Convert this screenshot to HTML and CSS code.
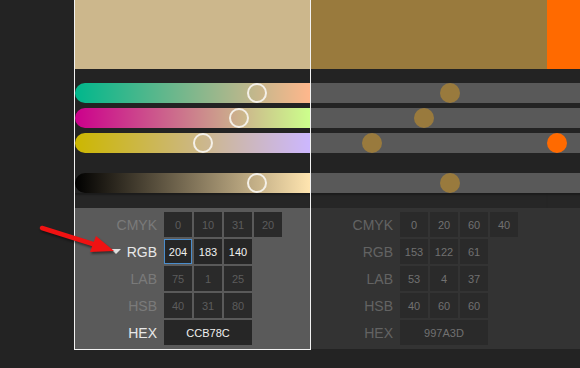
FILE: index.html
```html
<!DOCTYPE html>
<html lang="en">
<head>
    <meta charset="UTF-8">
    <title>Color compare</title>
    <link rel="stylesheet" href="styles.css">
</head>
<body>
    <div class="picker">
        <!-- current color -->
        <div class="panel current">
            <div class="swatch" style="background:#CCB78C"></div>
            <div class="sliders">
                <div class="track" style="background:linear-gradient(to right, rgb(0,183,140), rgb(255,183,140))"><span class="knob" style="left:172px"></span></div>
                <div class="track" style="background:linear-gradient(to right, rgb(204,0,140), rgb(204,255,140))"><span class="knob" style="left:154px"></span></div>
                <div class="track gap" style="background:linear-gradient(to right, rgb(204,183,0), rgb(204,183,255))"><span class="knob" style="left:118px"></span></div>
                <div class="track" style="background:linear-gradient(to right, #000, rgb(255,229,176))"><span class="knob" style="left:172px"></span></div>
            </div>
            <div class="divider"></div>
            <div class="values">
                <div class="row dim">
                    <div class="label">CMYK</div>
                    <div class="cell">0</div><div class="cell">10</div><div class="cell">31</div><div class="cell">20</div>
                </div>
                <div class="row on">
                    <div class="label"><span class="caret"></span>RGB</div>
                    <div class="cell focus">204</div><div class="cell">183</div><div class="cell">140</div>
                </div>
                <div class="row dim">
                    <div class="label">LAB</div>
                    <div class="cell">75</div><div class="cell">1</div><div class="cell">25</div>
                </div>
                <div class="row dim">
                    <div class="label">HSB</div>
                    <div class="cell">40</div><div class="cell">31</div><div class="cell">80</div>
                </div>
                <div class="row on">
                    <div class="label">HEX</div>
                    <div class="cell hex">CCB78C</div>
                </div>
            </div>
        </div>

        <!-- second color -->
        <div class="panel">
            <div class="swatch" style="background:#997A3D"></div>
            <div class="sliders">
                <div class="track"><span class="knob" style="left:129px;background:#997A3D"></span></div>
                <div class="track"><span class="knob" style="left:103px;background:#997A3D"></span></div>
                <div class="track gap"><span class="knob" style="left:51px;background:#997A3D"></span></div>
                <div class="track"><span class="knob" style="left:129px;background:#997A3D"></span></div>
            </div>
            <div class="divider"></div>
            <div class="values">
                <div class="row">
                    <div class="label">CMYK</div>
                    <div class="cell">0</div><div class="cell">20</div><div class="cell">60</div><div class="cell">40</div>
                </div>
                <div class="row">
                    <div class="label">RGB</div>
                    <div class="cell">153</div><div class="cell">122</div><div class="cell">61</div>
                </div>
                <div class="row">
                    <div class="label">LAB</div>
                    <div class="cell">53</div><div class="cell">4</div><div class="cell">37</div>
                </div>
                <div class="row">
                    <div class="label">HSB</div>
                    <div class="cell">40</div><div class="cell">60</div><div class="cell">60</div>
                </div>
                <div class="row">
                    <div class="label">HEX</div>
                    <div class="cell hex">997A3D</div>
                </div>
            </div>
        </div>

        <!-- third color, only its left edge is in view -->
        <div class="panel">
            <div class="swatch" style="background:#FF6A00"></div>
            <div class="sliders">
                <div class="track"></div>
                <div class="track"></div>
                <div class="track gap"><span class="knob" style="left:0px;background:#FF6A00"></span></div>
                <div class="track"></div>
            </div>
            <div class="divider"></div>
            <div class="values empty"></div>
        </div>
    </div>

    <svg class="arrow" width="580" height="368" viewBox="0 0 580 368">
        <line x1="42" y1="228" x2="96" y2="245" stroke="#f01212" stroke-width="4.5" stroke-linecap="round"/>
        <polygon points="114,251 96,236 90,252" fill="#f01212"/>
    </svg>
</body>
</html>
```

FILE: styles.css
```css
body {
    margin: 0;
    height: 368px;
    overflow: hidden;
    background-color: #232323;
    font-family: 'Liberation Sans', Arial, sans-serif;
    position: relative;
}

.picker {
    display: flex;
    padding-left: 74px;
    width: 1000px;
}

.panel {
    width: 236px;
    flex: none;
}

.panel.current {
    width: 235px;
    border: 1px solid #f2f2f2;
    border-top: 0;
}

.swatch {
    height: 69px;
}

.sliders {
    padding-top: 14px;
}

.track {
    position: relative;
    height: 20px;
    margin-bottom: 5px;
    background: #595959;
}

.track.gap {
    margin-bottom: 20px;
}

.track:last-child {
    margin-bottom: 0;
}

.current .track {
    border-radius: 10px 0 0 10px;
}

.knob {
    position: absolute;
    top: 0;
    width: 20px;
    height: 20px;
    border-radius: 50%;
    box-sizing: border-box;
}

.current .knob {
    border: 2px solid #f4f0e8;
}

.divider {
    height: 15px;
    background: #262626;
    box-shadow: inset 0 3px 2px -1px #1b1b1b;
}

.values {
    background: #333333;
    padding: 4px 0;
    display: flex;
    flex-direction: column;
    gap: 2px;
}

.values.empty {
    height: 133px;
}

.current .values {
    background: #5a5a5a;
}

.row {
    display: flex;
    gap: 2px;
    height: 25px;
}

.label {
    width: 82px;
    margin-right: 5px;
    display: flex;
    justify-content: flex-end;
    align-items: center;
    font-size: 14px;
    color: #636363;
}

.cell {
    width: 28px;
    box-sizing: border-box;
    display: flex;
    justify-content: center;
    align-items: center;
    background: #2a2a2a;
    font-size: 11px;
    color: #717171;
}

.cell.hex {
    width: 88px;
}

.current .row.dim .label {
    color: #7a7a7a;
}

.current .row.dim .cell {
    color: #5c5c5c;
}

.current .row.on .label {
    color: #e8e8e8;
}

.current .row.on .cell {
    color: #f0f0f0;
    background: #262626;
}

.cell.focus {
    border: 1px solid #4a8dcc;
}

.caret {
    width: 0;
    height: 0;
    border-left: 5px solid transparent;
    border-right: 5px solid transparent;
    border-top: 5px solid #e0e0e0;
    margin-right: 6px;
}

.arrow {
    position: absolute;
    left: 0;
    top: 0;
    pointer-events: none;
    filter: drop-shadow(1px 2px 1px rgba(0, 0, 0, 0.45));
}
```
